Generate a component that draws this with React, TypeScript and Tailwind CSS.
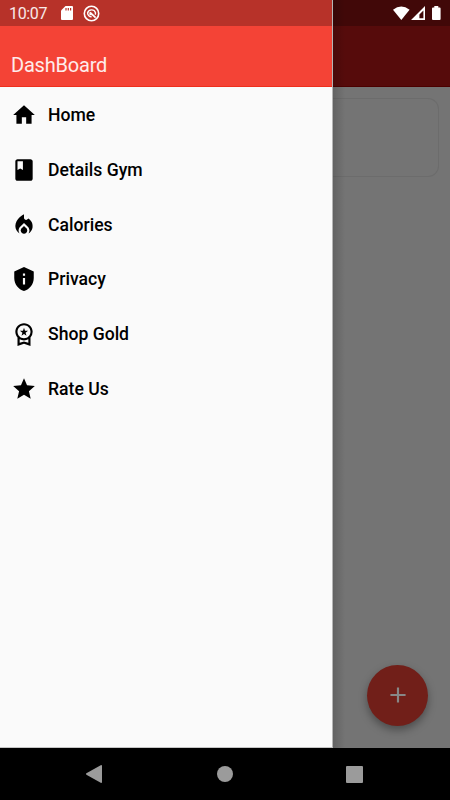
import type { IconType } from "react-icons";
import {
  MdAdd,
  MdClass,
  MdHome,
  MdLocalFireDepartment,
  MdOutlineWorkspacePremium,
  MdPrivacyTip,
  MdStar,
} from "react-icons/md";

const MENU: { icon: IconType; label: string }[] = [
  { icon: MdHome, label: "Home" },
  { icon: MdClass, label: "Details Gym" },
  { icon: MdLocalFireDepartment, label: "Calories" },
  { icon: MdPrivacyTip, label: "Privacy" },
  { icon: MdOutlineWorkspacePremium, label: "Shop Gold" },
  { icon: MdStar, label: "Rate Us" },
];

export default function App() {
  return (
    <div className="flex h-[800px] w-[450px] flex-col overflow-hidden bg-black font-['Roboto',sans-serif]">
      <div className="flex h-[748px]">
        <Drawer />
        <DimmedPage />
      </div>
      <NavigationBar />
    </div>
  );
}

function Drawer() {
  return (
    <aside className="flex w-[333px] shrink-0 flex-col border-r border-b border-r-[#b5b5b5] border-b-[#c4c4c4] bg-[#fafafa]">
      <div className="flex h-[26px] items-center bg-[#b73229] pl-[9px] text-white">
        <span className="w-[51px] pt-[2px] text-[16px] leading-6 tracking-[-0.35px] text-white/90">
          10:07
        </span>
        <SdCardIcon />
        <SyncIcon />
      </div>
      <header className="h-[61px] border-b border-[#ee2f1d] bg-[#f44336] pl-[11px] pt-[27px] text-[20px] leading-6 tracking-[-0.2px] text-white/90">
        DashBoard
      </header>
      <nav className="pt-px">
        {MENU.map(({ icon: Icon, label }) => (
          <a key={label} className="flex h-[54.7px] items-center gap-[11px] pl-[11px] text-black">
            <Icon size={26} />
            <span className="text-[17.6px] font-medium leading-6">{label}</span>
          </a>
        ))}
      </nav>
    </aside>
  );
}

// What is left of the page behind the drawer's scrim.
function DimmedPage() {
  return (
    <main className="relative flex flex-1 flex-col bg-[#747474]">
      <div className="flex h-[26px] items-center justify-end bg-[#410808] pr-[7px]">
        <StatusIcons />
      </div>
      <div className="h-[61px] border-b border-[#4c0000] bg-[#560b0b]" />
      <div className="mr-[11px] mt-[11px] h-[79px] rounded-r-[11px] border border-l-0 border-[#6c6c6c]" />
      <div
        className="absolute inset-y-0 left-0 w-3 bg-gradient-to-r from-black/15 to-transparent"
        aria-hidden
      />
      <button
        className="absolute bottom-[22.5px] right-[22px] flex h-[61px] w-[61px] items-center justify-center rounded-full bg-[#711f19] text-[#878787] shadow-[0_4px_8px_rgba(0,0,0,0.35)]"
        aria-label="Add"
      >
        <MdAdd size={26} />
      </button>
    </main>
  );
}

function NavigationBar() {
  return (
    <footer className="flex h-[52px] items-center bg-black pl-[86px] text-[#9b9b9b]">
      <svg width="16" height="18" viewBox="0 0 16 18" fill="currentColor" aria-hidden>
        <path d="M.4 8.3 14.7.2q1.3-.5 1.3.7v16.2q0 1.2-1.3.6L.4 9.7q-.8-.7 0-1.4z" />
      </svg>
      <span className="ml-[115px] h-4 w-4 rounded-full bg-[#9b9b9b]" />
      <span className="ml-[113px] h-[17px] w-[17px] rounded-[1px] bg-[#9b9b9b]" />
    </footer>
  );
}

function SdCardIcon() {
  return (
    <svg className="ml-px" width="12" height="14" viewBox="0 0 12 14" aria-hidden>
      <path fill="white" d="M4.5 0H11q1 0 1 1v12q0 1-1 1H1q-1 0-1-1V4.5z" />
      <path stroke="#b73229" strokeWidth="1.2" d="M5 2v2.5M7.3 2v2.5M9.6 2v2.5" />
    </svg>
  );
}

function SyncIcon() {
  return (
    <svg
      className="ml-[10px]"
      width="17"
      height="17"
      viewBox="0 0 17 17"
      fill="none"
      stroke="white"
      aria-hidden
    >
      <circle cx="8.5" cy="8.5" r="7.2" strokeWidth="1.6" />
      <path strokeWidth="1.8" d="m7 7.4 5.6 5.2" />
      <path strokeWidth="1.4" d="M8.6 11.8A3.9 3.9 0 0 1 4.6 8 4.1 4.1 0 0 1 12.5 7.8q.1 1-.4 1.8" />
      <path strokeWidth="1.2" d="M7 7.4v2.2h1.8" />
    </svg>
  );
}

function StatusIcons() {
  return (
    <svg width="50" height="16" viewBox="0 0 50 16" fill="white" aria-hidden>
      <path d="M0 4.7Q8.3-1.8 16.6 4.7L8.3 15z" />
      <path fillRule="evenodd" d="M18 15 32 1v14zM26.4 13.3h4V5.4L26.4 9.6z" />
      <path d="M41.3 1h4v1.4h1.3q1 0 1 1v10.6q0 1-1 1h-6.6q-1 0-1-1V3.4q0-1 1-1h1.3z" />
    </svg>
  );
}
